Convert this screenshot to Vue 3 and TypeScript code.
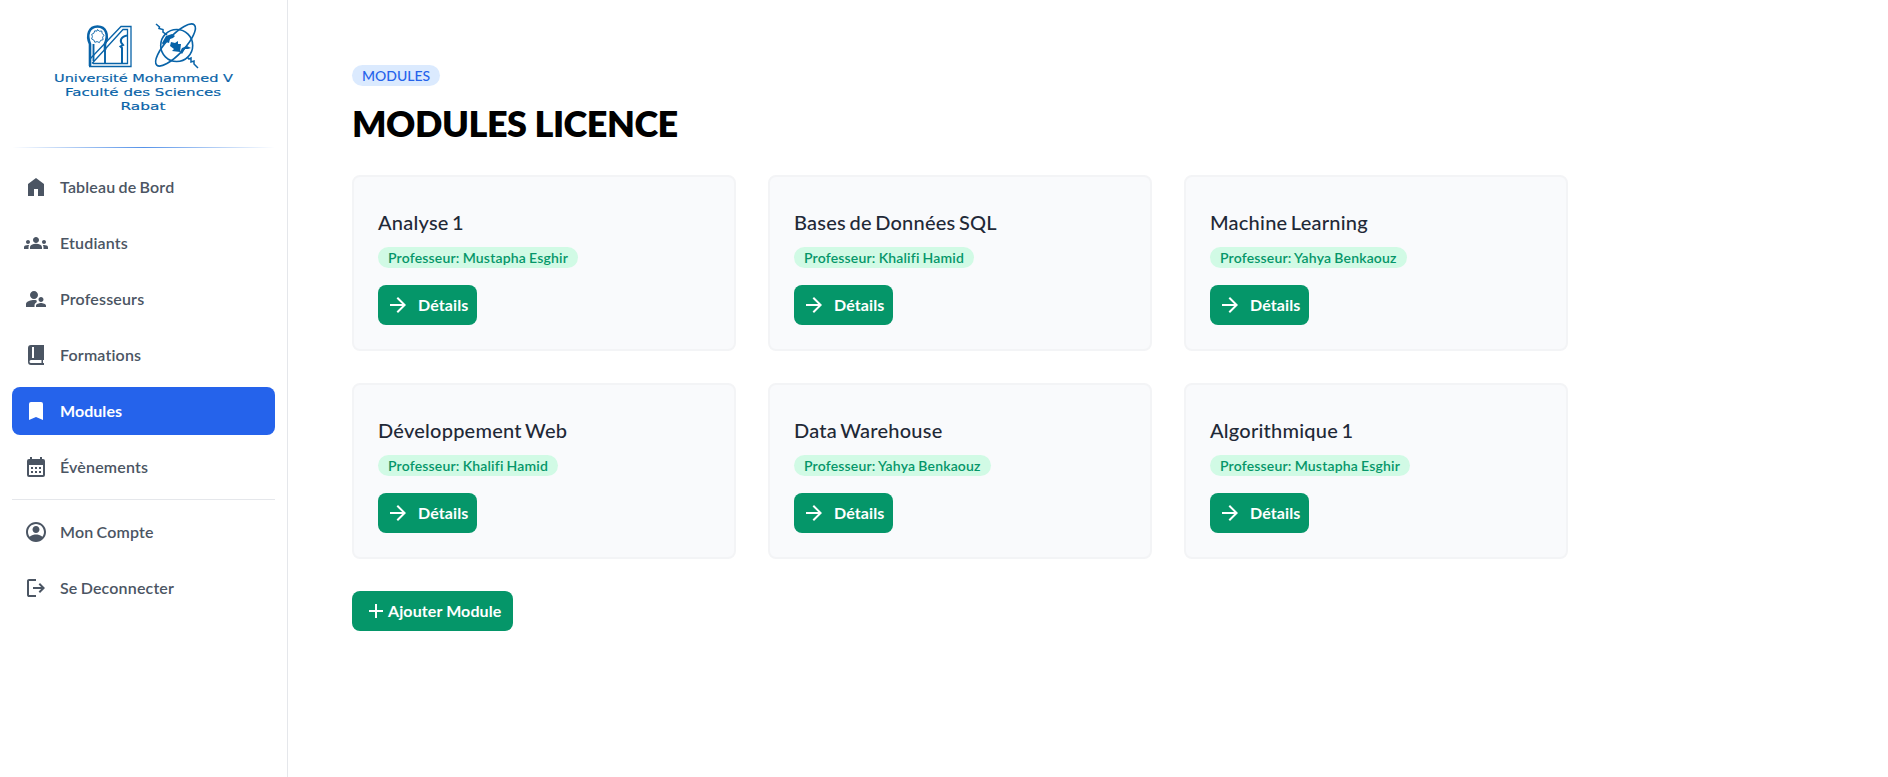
<script setup lang="ts">
interface NavItem {
  label: string
  path: string
  active?: boolean
}

interface CourseModule {
  title: string
  teacher: string
}

const mainNav: NavItem[] = [
  { label: 'Tableau de Bord', path: 'M4 21V9l8-6 8 6v12h-6v-7h-4v7H4Z' },
  {
    label: 'Etudiants',
    path: 'M12 12.75c1.63 0 3.07.39 4.24.9 1.08.48 1.76 1.56 1.76 2.73V18H6v-1.61c0-1.18.68-2.26 1.76-2.73 1.17-.52 2.61-.91 4.24-.91zM4 13c1.1 0 2-.9 2-2s-.9-2-2-2-2 .9-2 2 .9 2 2 2zm1.13 1.1C4.76 14.04 4.39 14 4 14c-.99 0-1.93.21-2.78.58C.48 14.9 0 15.62 0 16.43V18h4.5v-1.61c0-.83.23-1.61.63-2.29zM20 13c1.1 0 2-.9 2-2s-.9-2-2-2-2 .9-2 2 .9 2 2 2zm4 3.43c0-.81-.48-1.53-1.22-1.85C21.93 14.21 20.99 14 20 14c-.39 0-.76.04-1.13.1.4.68.63 1.46.63 2.29V18H24v-1.57zM12 6c1.66 0 3 1.34 3 3s-1.34 3-3 3-3-1.34-3-3 1.34-3 3-3z',
  },
  {
    label: 'Professeurs',
    path: 'M10 12c2.21 0 4-1.79 4-4s-1.79-4-4-4-4 1.79-4 4 1.79 4 4 4zM17 15c1.38 0 2.49-1.12 2.49-2.5S18.38 10 17 10s-2.5 1.12-2.5 2.5S15.62 15 17 15zM17 16c-1.83 0-5 .92-5 2.75V20h10v-1.25C22 16.92 18.83 16 17 16zM10 13c-2.67 0-8 1.34-8 4v3h8.5v-1.5c0-.85.33-2.34 2.37-3.47-.3-.81-.24-1.28-.37-1.8-.9-.15-1.75-.23-2.5-.23z',
  },
  {
    label: 'Formations',
    path: 'M7 2h13v15H7a1.5 1.5 0 0 0 0 3h13v2H7a3 3 0 0 1-3-3V5a3 3 0 0 1 3-3zm1 2v11h2V4H8zM17.5 17H19v3h-1.5z',
  },
  { label: 'Modules', path: 'M5 21V5q0-2 2-2h10q2 0 2 2v16l-7-3-7 3Z', active: true },
  {
    label: 'Évènements',
    path: 'M19 4h-1V2h-2v2H8V2H6v2H5a2 2 0 0 0-2 2v14a2 2 0 0 0 2 2h14a2 2 0 0 0 2-2V6a2 2 0 0 0-2-2zm0 16H5V10h14v10zM7 12h2v2H7zm4 0h2v2h-2zm4 0h2v2h-2zM7 16h2v2H7zm4 0h2v2h-2zm4 0h2v2h-2z',
  },
]

const accountNav: NavItem[] = [
  {
    label: 'Mon Compte',
    path: 'M12 2C6.48 2 2 6.48 2 12s4.48 10 10 10 10-4.48 10-10S17.52 2 12 2zM18.36 16.83C16.93 15.09 13.46 14.5 12 14.5s-4.93.59-6.36 2.33C4.62 15.49 4 13.82 4 12c0-4.41 3.59-8 8-8s8 3.59 8 8c0 1.82-.62 3.49-1.64 4.83zM12 6c-1.94 0-3.5 1.56-3.5 3.5S10.06 13 12 13s3.5-1.56 3.5-3.5S13.94 6 12 6z',
  },
  {
    label: 'Se Deconnecter',
    path: 'M5 21q-.83 0-1.41-.59T3 19V5q0-.83.59-1.41T5 3h7v2H5v14h7v2H5Zm11-4-1.38-1.45L17.17 13H9v-2h8.17l-2.55-2.55L16 7l5 5-5 5Z',
  },
]

const courseModules: CourseModule[] = [
  { title: 'Analyse 1', teacher: 'Mustapha Esghir' },
  { title: 'Bases de Données SQL', teacher: 'Khalifi Hamid' },
  { title: 'Machine Learning', teacher: 'Yahya Benkaouz' },
  { title: 'Développement Web', teacher: 'Khalifi Hamid' },
  { title: 'Data Warehouse', teacher: 'Yahya Benkaouz' },
  { title: 'Algorithmique 1', teacher: 'Mustapha Esghir' },
]
</script>

<template>
  <div class="layout">
    <aside class="sidebar">
      <svg class="logo" viewBox="0 0 210 110" role="img">
        <g fill="none" stroke="#0863a8">
          <!-- Gateway -->
          <path d="M50 56V34C46 25 49 16.5 57.5 16.5S69 25 65 34V40" stroke-width="2.6" />
          <path d="M65 40V54M53.5 34V51" stroke-width="1.9" />
          <path d="M57.5 19.5l1.8 1.7 2.5-.2.3 2.5 2 1.7-1.5 2 .5 2.5-2.5.7-1.2 2.2-2.3-1-2.3.7-1-2.3-2.2-1 .8-2.4-.7-2.3 2.2-1.1.8-2.4 2.3.3z" stroke-width=".9" />
          <path d="M49 56.5H91V16.5H81L50 49M53 53.5H87.5V19.5H83L52 53.5" stroke-width="1.3" />
          <path d="M82 53V38L80.5 36.5 83 35C79 31 80.5 27 87 25.5" stroke-width="2" />
          <!-- Globe and orbit -->
          <circle cx="136.7" cy="35.5" r="16" stroke-width="1.6" />
          <ellipse cx="135.5" cy="35" rx="27.5" ry="9" transform="rotate(-47 135.5 35)" stroke-width="1.6" />
          <path d="M116 14l3.5 3-.5 1.5 4 1 0 2.5 4 3M147 47l2 2 2-1 0 4 3-1 0 3 4 4" stroke-width="1.5" />
        </g>
        <path d="M122 33l4-7 6-2 3 2-2 2-3 1-1 4-3-1-3 3zM131 32l4 1 3-2 0 3 3 0-1 8-8-1 2-2-4-3zM140 42l2-4 5-2 4 2-3 1-3 0-3 5z" fill="#0863a8" />
        <g fill="#0863a8" class="logo-text">
          <text x="14" y="72.3" textLength="179" lengthAdjust="spacingAndGlyphs">Université Mohammed V</text>
          <text x="25" y="85.7" textLength="156" lengthAdjust="spacingAndGlyphs">Faculté des Sciences</text>
          <text x="80.5" y="99.5" textLength="45" lengthAdjust="spacingAndGlyphs">Rabat</text>
        </g>
      </svg>
      <div class="glow-line"></div>
      <nav class="nav">
        <a v-for="item in mainNav" :key="item.label" class="nav-item" :class="{ active: item.active }">
          <svg class="icon" viewBox="0 0 24 24"><path :d="item.path" fill-rule="evenodd" /></svg>
          <span>{{ item.label }}</span>
        </a>
      </nav>
      <nav class="nav account">
        <a v-for="item in accountNav" :key="item.label" class="nav-item">
          <svg class="icon" viewBox="0 0 24 24"><path :d="item.path" fill-rule="evenodd" /></svg>
          <span>{{ item.label }}</span>
        </a>
      </nav>
    </aside>

    <main class="content">
      <span class="badge">MODULES</span>
      <h1>MODULES LICENCE</h1>
      <section class="grid">
        <article v-for="m in courseModules" :key="m.title" class="card">
          <h2>{{ m.title }}</h2>
          <span class="badge teacher">Professeur: {{ m.teacher }}</span>
          <button class="btn details" type="button">
            <svg class="icon" viewBox="0 0 24 24"><path d="M12 20l-1.43-1.4L16.17 13H4v-2h12.17l-5.6-5.6L12 4l8 8-8 8Z" /></svg>
            <span>Détails</span>
          </button>
        </article>
      </section>
      <button class="btn add" type="button">
        <svg class="icon" viewBox="0 0 24 24"><path d="M11 19v-6H5v-2h6V5h2v6h6v2h-6v6h-2Z" /></svg>
        <span>Ajouter Module</span>
      </button>
    </main>
  </div>
</template>

<style>
body {
  margin: 0;
  background: #fff;
}
</style>

<style scoped>
* {
  box-sizing: border-box;
}
.layout {
  display: flex;
  height: 777px;
  overflow: hidden;
  font-family: Lato, sans-serif;
  font-size: 16px;
  line-height: 24px;
}
.sidebar {
  width: 288px;
  flex: none;
  border-right: 1px solid #e5e7eb;
  padding: 10px 12px 0;
}
.logo {
  display: block;
  width: 210px;
  height: 110px;
  margin-left: 28px;
}
.logo-text {
  font-family: 'DejaVu Sans', sans-serif;
  font-size: 10.2px;
  stroke: #0863a8;
  stroke-width: 0.15px;
}
.glow-line {
  height: 1px;
  margin: 27px 0 15px;
  background: linear-gradient(to right, rgba(59, 130, 246, 0), rgba(29, 110, 225, 0.75), rgba(59, 130, 246, 0));
}
.nav {
  display: flex;
  flex-direction: column;
  gap: 8px;
  width: 263px;
}
.account {
  margin-top: 8px;
  padding-top: 8px;
  border-top: 1px solid #e5e7eb;
}
.nav-item {
  display: flex;
  align-items: center;
  gap: 12px;
  height: 48px;
  padding: 0 12px;
  border-radius: 8px;
  color: #4b5563;
  font-weight: 600;
  letter-spacing: 0.17px;
  word-spacing: -1px;
}
.nav-item.active {
  background: #2563eb;
  color: #fff;
  font-weight: 700;
  letter-spacing: 0.05px;
}
.icon {
  width: 24px;
  height: 24px;
  flex: none;
  fill: currentColor;
}
.content {
  display: flex;
  flex-direction: column;
  align-items: flex-start;
  padding: 65px 0 0 64px;
}
.badge {
  height: 21px;
  padding: 0 10px;
  border-radius: 11px;
  background: #dbeafe;
  color: #2563eb;
  font-size: 14px;
  font-weight: 500;
  line-height: 22px;
}
h1 {
  margin: 17px 0 32px;
  color: #000;
  font-size: 36px;
  font-weight: 800;
  line-height: 40px;
  letter-spacing: -0.45px;
}
.grid {
  display: grid;
  grid-template-columns: repeat(3, 384px);
  gap: 32px;
}
.card {
  display: flex;
  flex-direction: column;
  align-items: flex-start;
  height: 176px;
  padding: 31px 24px 24px;
  border: 2px solid #f3f4f6;
  border-radius: 8px;
  background: #f9fafc;
}
h2 {
  margin: 0 0 11px;
  color: #1f2937;
  font-size: 20px;
  font-weight: 500;
  line-height: 28px;
  letter-spacing: 0.23px;
  word-spacing: -1.8px;
}
.teacher {
  background: #d1fae5;
  color: #059669;
  font-weight: 600;
  letter-spacing: 0.18px;
  word-spacing: -0.6px;
}
.btn {
  display: flex;
  align-items: center;
  height: 40px;
  padding: 0 8px;
  border: 0;
  border-radius: 8px;
  background: #059669;
  color: #fff;
  font: 700 16px/24px Lato, sans-serif;
  letter-spacing: 0.1px;
}
.details {
  gap: 8px;
  width: 99px;
  margin-top: 17px;
}
.add {
  margin-top: 32px;
  padding: 0 12px;
}
</style>
